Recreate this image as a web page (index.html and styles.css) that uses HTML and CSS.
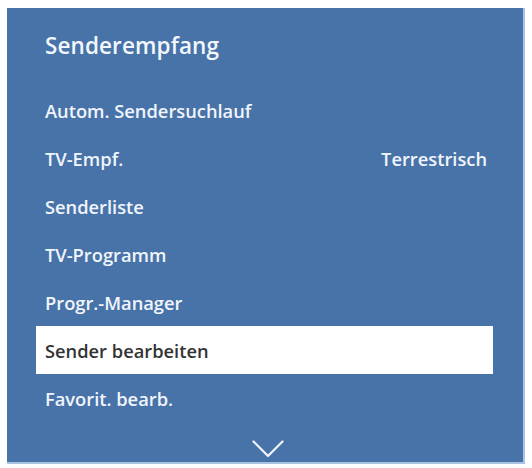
FILE: index.html
```html
<!DOCTYPE html>
<html lang="de">
<head>
<meta charset="utf-8">
<link rel="stylesheet" href="styles.css">
</head>
<body>
<div class="panel">
  <div class="title">Senderempfang</div>
  <ul class="menu">
    <li class="row">Autom. Sendersuchlauf</li>
    <li class="row"><span>TV-Empf.</span><span class="value">Terrestrisch</span></li>
    <li class="row">Senderliste</li>
    <li class="row">TV-Programm</li>
    <li class="row">Progr.-Manager</li>
    <li class="row selected">Sender bearbeiten</li>
    <li class="row">Favorit. bearb.</li>
  </ul>
  <div class="more">
    <svg width="32" height="18" viewBox="0 0 32 18"><path d="M1.5 1.5 L16 16 L30.5 1.5" fill="none" stroke="#f2f6fb" stroke-width="2.2" stroke-linecap="round" stroke-linejoin="round"/></svg>
  </div>
</div>
</body>
</html>
```
FILE: styles.css
```css
html, body {
  margin: 0;
  padding: 0;
  background: #ffffff;
}
body {
  font-family: "Open Sans", "DejaVu Sans", sans-serif;
}
.panel {
  margin: 8px 0 0 7px;
  width: 518px;
  height: 456px;
  box-sizing: border-box;
  background: #4873a9;
  border-right: 2px solid #a9c4e0;
  border-bottom: 2px solid #a9c4e0;
  padding: 0 30px 0 29px;
  display: flex;
  flex-direction: column;
}
.title {
  height: 78px;
  box-sizing: border-box;
  padding: 23px 0 0 9px;
  font-size: 22.5px;
  line-height: 30px;
  font-weight: 600;
  color: #f3f7fc;
  letter-spacing: 0.1px;
}
.menu {
  list-style: none;
  margin: 0;
  padding: 0;
}
.row {
  height: 48px;
  display: flex;
  align-items: center;
  justify-content: space-between;
  padding: 0 6px 0 9px;
  font-size: 18.3px;
  font-weight: 600;
  color: #f1f5fb;
  letter-spacing: 0;
}
.row.selected {
  background: #ffffff;
  color: #333333;
}
.more {
  display: flex;
  justify-content: center;
  padding: 18px 0 0 6px;
}
```
